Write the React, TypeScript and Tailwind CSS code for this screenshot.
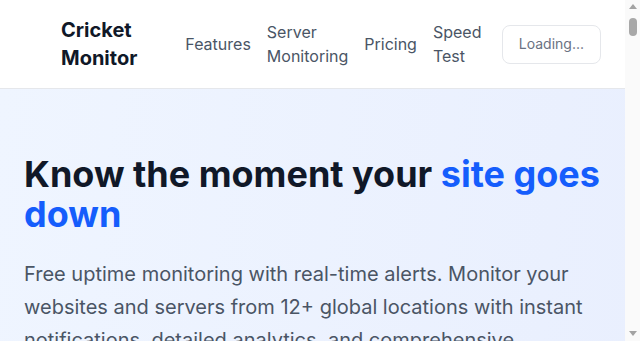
import React from 'react';

const navLinks = ['Features', 'Server Monitoring', 'Pricing', 'Speed Test'];

const Header = () => {
  return (
    <header className="bg-white border-b border-gray-200">
      <div className="h-[88px] pl-[61px] pr-6 flex items-center">
        <a href="#" className="w-min text-xl font-bold text-gray-900 leading-7">
          Cricket Monitor
        </a>
        <nav className="ml-12 flex items-center gap-4">
          {navLinks.map((link) => (
            <a key={link} href="#" className="w-min text-base leading-6 text-gray-600">
              {link}
            </a>
          ))}
        </nav>
        <button className="ml-auto h-[39px] px-4 rounded-lg border border-gray-200 text-sm text-gray-500">
          Loading...
        </button>
      </div>
    </header>
  );
};

const Hero = () => {
  return (
    <section className="bg-gradient-to-br from-[#eff5ff] to-[#e4eafd] min-h-[6100px]">
      <div className="px-6 pt-[65px] pb-16">
        <h1 className="text-4xl font-bold text-gray-900 leading-10 mb-6">
          Know the moment your <span className="text-blue-600">site goes down</span>
        </h1>
        <p className="text-xl text-gray-600 leading-[33px]">
          Free uptime monitoring with real-time alerts. Monitor your websites and servers from 12+
          global locations with instant notifications, detailed analytics, and comprehensive
          performance reports.
        </p>
      </div>
    </section>
  );
};

// window scrollbar as it shows in the screenshot
const Scrollbar = () => {
  return (
    <div className="w-[15px] shrink-0 bg-[#fafafa] flex flex-col items-center">
      <div className="mt-[4px] w-0 h-0 border-x-[4px] border-x-transparent border-b-[5px] border-b-[#a3a3a3]" />
      <div className="mt-[9px] w-[8px] h-[18px] rounded-full bg-[#a8a8a8]" />
      <div className="flex-1" />
      <div className="mb-[5px] w-0 h-0 border-x-[4px] border-x-transparent border-t-[5px] border-t-[#a3a3a3]" />
    </div>
  );
};

export default function App() {
  return (
    <div className="h-[341px] flex overflow-hidden font-['Inter',sans-serif]">
      <main className="flex-1 min-w-0 overflow-hidden">
        <Header />
        <Hero />
      </main>
      <Scrollbar />
    </div>
  );
}
